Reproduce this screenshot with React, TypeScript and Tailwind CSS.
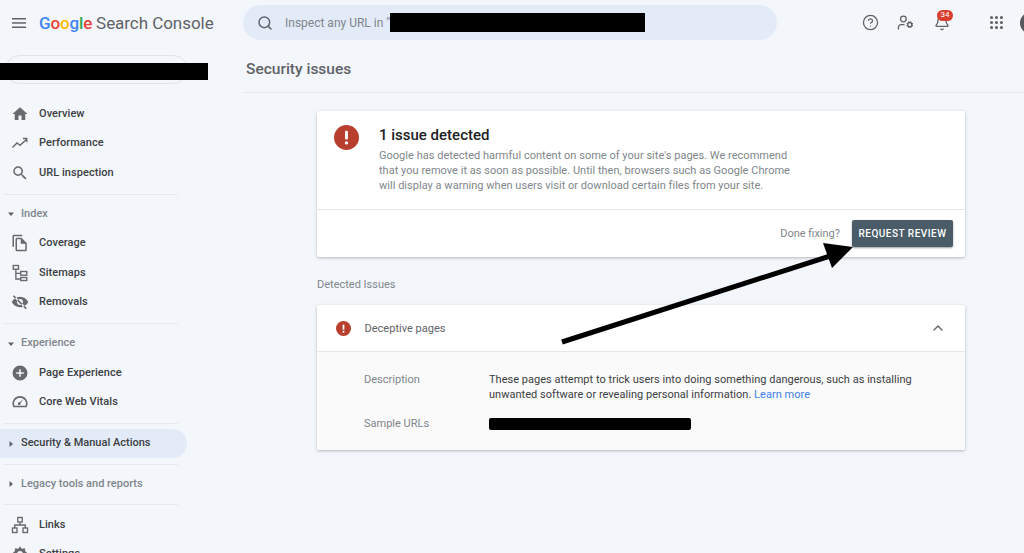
import { Bell, ChevronUp, CircleHelp, Grip, Search, UserCog } from "lucide-react";
import { ReactNode } from "react";

const font = "font-['Roboto','Liberation_Sans',sans-serif]";

function Caret({ open }: { open?: boolean }) {
  return (
    <svg width="8" height="8" viewBox="0 0 8 8" className="shrink-0 fill-[#5f6368]">
      {open ? <path d="M1 2.5h6L4 6z" /> : <path d="M2.5 1v6L6 4z" />}
    </svg>
  );
}

const outline = { fill: "none", stroke: "currentColor", strokeWidth: 1.8 };

const icons: Record<string, ReactNode> = {
  home: <path d="M10 20v-6h4v6h5v-8h3L12 3 2 12h3v8z" />,
  trend: <path d="M2 18l6-6 4 3 9-8M16 6h5v5" {...outline} />,
  search: <path d="M15.5 14h-.79l-.28-.27A6.471 6.471 0 0 0 16 9.5 6.5 6.5 0 1 0 9.5 16c1.61 0 3.09-.59 4.23-1.57l.27.28v.79l5 4.99L20.49 19l-4.99-5zm-6 0C7.01 14 5 11.99 5 9.5S7.01 5 9.5 5 14 7.01 14 9.5 11.990 14 9.500 14z" />,
  coverage: <path d="M15 1H4a2 2 0 0 0-2 2v14h2V3h11zm-1 4H8a2 2 0 0 0-2 2v14a2 2 0 0 0 2 2h11a2 2 0 0 0 2-2V12zm5 16H8V7h5v6h6z" />,
  sitemap: (
    <g {...outline}>
      <rect x="3" y="2" width="7" height="5" />
      <rect x="13" y="10" width="8" height="5" />
      <rect x="13" y="18" width="8" height="4" />
      <path d="M6.500 7v13H13M6.500 12.500H13" />
    </g>
  ),
  removal: <path d="M12 5C7 5 3 8 1 12c2 4 6 7 11 7s9-3 11-7c-2-4-6-7-11-7zm0 11a4 4 0 1 1 0-8 4 4 0 0 1 0 8zM4 3l17 17-1.500 1.500-17-17z" />,
  page: <path d="M12 2a10 10 0 1 0 0 20 10 10 0 0 0 0-20zm5 11h-4v4h-2v-4H7v-2h4V7h2v4h4z" />,
  vitals: <path d="M12 4a10 10 0 0 0-8.700 15h17.400A10 10 0 0 0 12 4zm7.500 13h-15a8 8 0 1 1 15 0zM16.500 8.500l-4 5a1.800 1.800 0 1 1-1.500-1z" />,
  links: (
    <g {...outline}>
      <rect x="9" y="2" width="6" height="6" />
      <rect x="2" y="16" width="6" height="6" />
      <rect x="16" y="16" width="6" height="6" />
      <path d="M12 8v4M5 16v-4h14v4" />
    </g>
  ),
  settings: <path d="M12 2l2.500 3 4-.500.500 4 3 2.500-3 2.500-.500 4-4-.500-2.500 3-2.500-3-4 .500-.500-4-3-2.500 3-2.500.500-4 4 .500zm0 6a4 4 0 1 0 0 8 4 4 0 0 0 0-8z" />,
};

function NavItem({ icon, label }: { icon: string; label: string }) {
  return (
    <div className="flex h-[29.500px] items-center pl-[9px]">
      <svg width="22" height="22" viewBox="0 0 24 24" className="mr-[8px] shrink-0 scale-[0.82] fill-[#666a6f] text-[#666a6f]">
        {icons[icon]}
      </svg>
      <span className="text-[11px] font-medium tracking-[0.05px] text-[#3c4043]">{label}</span>
    </div>
  );
}

function Group({ label, open, strong }: { label: string; open?: boolean; strong?: boolean }) {
  return (
    <div className={`mr-[53px] flex h-[29px] items-center gap-[6px] rounded-r-[15px] pl-[7px] text-[11px] font-medium ${strong ? "bg-[#e3ebf8] text-[#3c4043]" : "text-[#80868b]"}`}>
      <Caret open={open} />
      <span>{label}</span>
    </div>
  );
}

function Divider({ className = "mb-[5px] mt-[6px]" }: { className?: string }) {
  return <div className={`ml-[4px] mr-[62px] h-px bg-[#e6e9ee] ${className}`} />;
}

function Sidebar() {
  return (
    <aside className="w-[240px] shrink-0">
      <div className="flex h-[46px] items-center pl-[12px]">
        <svg width="14" height="10" viewBox="0 0 14 10" className="fill-[#5f6368]">
          <rect width="14" height="1.500" />
          <rect y="4.200" width="14" height="1.500" />
          <rect y="8.500" width="14" height="1.500" />
        </svg>
        <div className="ml-[13px] flex items-baseline text-[17px] leading-none">
          <span className="font-medium tracking-[-0.15px]">
            <span className="text-[#4285f4]">G</span>
            <span className="text-[#ea4335]">o</span>
            <span className="text-[#fbbc05]">o</span>
            <span className="text-[#4285f4]">g</span>
            <span className="text-[#34a853]">l</span>
            <span className="text-[#ea4335]">e</span>
          </span>
          <span className="ml-[4px] tracking-[-0.05px] text-[#5f6368]">Search Console</span>
        </div>
      </div>
      <div className="relative ml-[5px] mt-[9px] h-[29px] w-[183px] rounded-full border border-[#dfe2e7]">
        <div className="absolute left-[-6px] top-[7px] h-[17px] w-[208px] bg-black" />
      </div>
      <div className="mt-[15px]">
        <NavItem icon="home" label="Overview" />
        <NavItem icon="trend" label="Performance" />
        <NavItem icon="search" label="URL inspection" />
      </div>
      <Divider />
      <Group label="Index" open />
      <NavItem icon="coverage" label="Coverage" />
      <NavItem icon="sitemap" label="Sitemaps" />
      <NavItem icon="removal" label="Removals" />
      <Divider />
      <Group label="Experience" open />
      <NavItem icon="page" label="Page Experience" />
      <NavItem icon="vitals" label="Core Web Vitals" />
      <Divider />
      <Group label="Security &amp; Manual Actions" strong />
      <Divider className="mb-[5px] mt-[5.500px]" />
      <Group label="Legacy tools and reports" />
      <Divider className="mb-[5px] mt-[5.500px]" />
      <NavItem icon="links" label="Links" />
      <NavItem icon="settings" label="Settings" />
    </aside>
  );
}

function Alert({ size }: { size: number }) {
  return (
    <svg width={size} height={size} viewBox="0 0 24 24" className="shrink-0">
      <circle cx="12" cy="12" r="12" fill="#b83f2e" />
      <rect x="10.600" y="5.500" width="2.800" height="8.500" rx="1" fill="#fff" />
      <circle cx="12" cy="17.200" r="1.600" fill="#fff" />
    </svg>
  );
}

function Header() {
  return (
    <div className="flex h-[45px] items-center">
      <div className="flex h-[35px] w-[534px] items-center rounded-full bg-[#e3ebf8] pl-[14px] text-[#5f6368]">
        <Search size={16} strokeWidth={2.200} />
        <span className="ml-[12px] text-[12px] text-[#80868b]">Inspect any URL in "</span>
        <div className="h-[19px] w-[255px] bg-black" />
      </div>
      <div className="ml-[85px] flex items-center text-[#5f6368]">
        <CircleHelp size={17} strokeWidth={1.800} />
        <UserCog size={17} strokeWidth={1.800} className="ml-[18px]" />
        <div className="relative ml-[20px]">
          <Bell size={16} strokeWidth={2} />
          <span className="absolute left-[3px] top-[-5px] flex h-[11px] w-[16px] items-center justify-center rounded-full bg-[#d93f31] text-[8px] text-white">34</span>
        </div>
        <Grip size={17} strokeWidth={2.400} className="ml-[38px]" />
      </div>
    </div>
  );
}

export default function App() {
  return (
    <div className={`relative flex h-[553px] w-[1024px] overflow-hidden bg-[#f3f6fb] ${font}`}>
      <Sidebar />
      <main className="min-w-0 flex-1 pl-[3px]">
        <Header />
        <div className="flex h-[48px] items-center border-b border-[#e5e8ed] pl-[3px] pt-[2px] text-[15.500px] font-medium text-[#5f6368]">
          Security issues
        </div>
        <div className="ml-[74px] w-[648px] pt-[18px]">
          <section className="rounded-[2px] bg-white shadow-[0_1px_3px_rgba(60,64,67,0.35)]">
            <div className="flex h-[99px] border-b border-[#e3e5e8] pl-[17px] pt-[14px]">
              <Alert size={25} />
              <div className="ml-[20px]">
                <h2 className="text-[15px] font-medium leading-[20px] text-[#202124]">1 issue detected</h2>
                <p className="mt-[3px] w-[420px] text-[11px] leading-[15px] tracking-[0.025px] text-[#80868b]">
                  Google has detected harmful content on some of your site's pages. We recommend that you remove it as soon as possible. Until then, browsers such as Google Chrome will display a warning when users visit or download certain files from your site.
                </p>
              </div>
            </div>
            <div className="flex h-[47px] items-center justify-end pr-[12px]">
              <span className="pt-[2px] text-[11px] text-[#80868b]">Done fixing?</span>
              <button className="ml-[12px] h-[27px] w-[101px] rounded-[2px] bg-[#4a5c68] text-[10px] font-medium tracking-[0.5px] text-white shadow-[0_1px_2px_rgba(60,64,67,0.5)]">
                REQUEST REVIEW
              </button>
            </div>
          </section>

          <div className="mb-[13px] mt-[20px] text-[11px] leading-[15px] text-[#80868b]">Detected Issues</div>

          <section className="rounded-[2px] bg-white shadow-[0_1px_3px_rgba(60,64,67,0.35)]">
            <div className="flex h-[47px] items-center border-b border-[#e6e7ea] px-[19px]">
              <Alert size={15} />
              <span className="ml-[13.500px] pt-[2px] text-[11px] tracking-[0.02px] text-[#5f6368]">Deceptive pages</span>
              <ChevronUp size={16} strokeWidth={2} className="ml-auto text-[#5f6368]" />
            </div>
            <div className="h-[98px] rounded-b-[2px] bg-[#fafafa] pl-[47px]">
              <div className="flex pt-[20px] text-[11px] leading-[15px] tracking-[0.025px]">
                <span className="w-[125px] shrink-0 text-[#80868b]">Description</span>
                <p className="w-[450px] text-[#3c4043]">
                  These pages attempt to trick users into doing something dangerous, such as installing unwanted software or revealing personal information. <span className="text-[#3f7fe8]">Learn more</span>
                </p>
              </div>
              <div className="mt-[14px] flex items-center text-[11px] leading-[15px]">
                <span className="w-[125px] shrink-0 text-[#80868b]">Sample URLs</span>
                <div className="h-[12px] w-[202px] rounded-[2px] bg-black" />
              </div>
            </div>
          </section>
        </div>
      </main>
      <div className="absolute left-[1020px] top-[12px] h-[22px] w-[22px] rounded-full bg-[#55585c]" />
      <svg className="pointer-events-none absolute left-0 top-0" width="1024" height="553" viewBox="0 0 1024 553">
        <line x1="562" y1="342" x2="830" y2="256" stroke="#000" strokeWidth="5" />
        <polygon points="853,247 832,268 823,243" fill="#000" />
      </svg>
    </div>
  );
}
